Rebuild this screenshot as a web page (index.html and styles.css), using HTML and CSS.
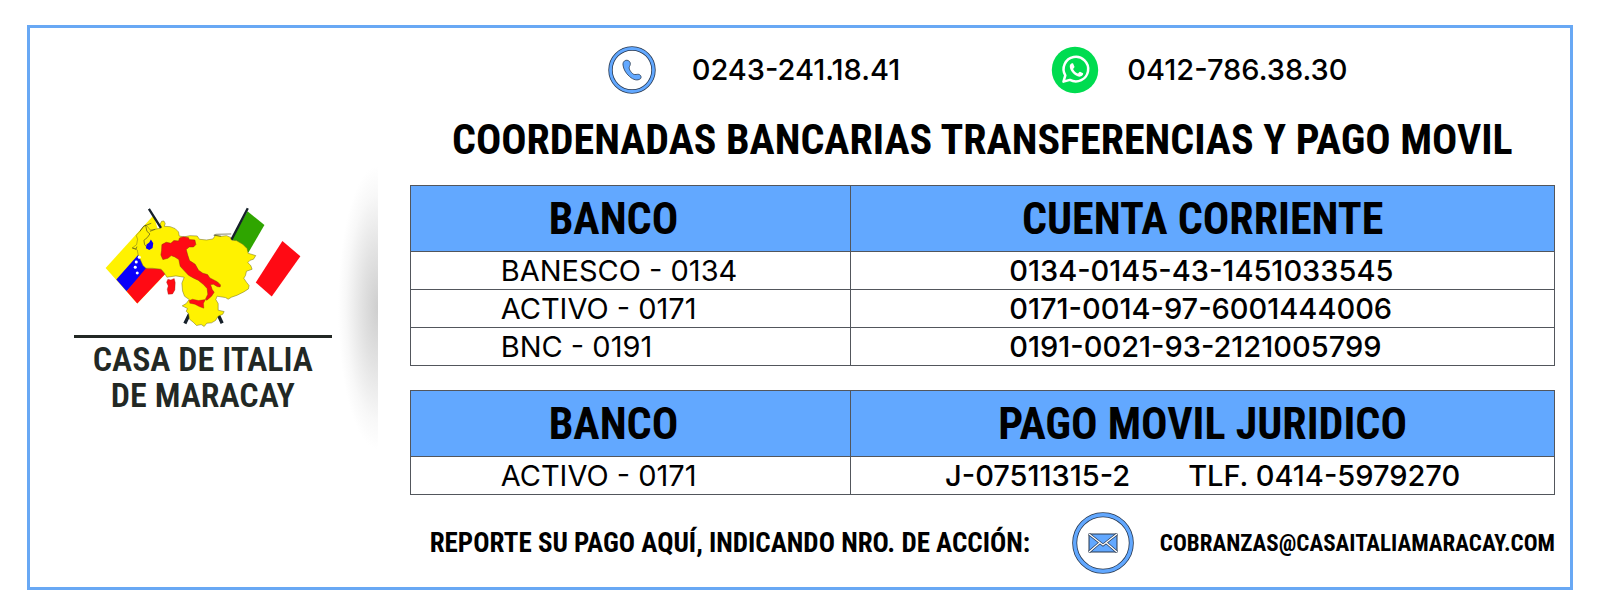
FILE: index.html
```html
<!DOCTYPE html>
<html lang="es">
<head>
<meta charset="utf-8">
<title>Casa de Italia de Maracay - Coordenadas bancarias</title>
<meta name="viewport" content="width=device-width, initial-scale=1">
<link rel="stylesheet" href="styles.css">
</head>
<body>
<div class="frame">
  <aside class="brand">
    <svg class="emblem" viewBox="42 50 774 372" aria-hidden="true">
      <path d="M281 78 137 236 232 343 330 240Z" fill="#fff200"/>
      <path d="M238 193 169 271 200 306 262 240Z" fill="#0a00fa"/>
      <path d="M258 237 200 306 232 343 318 252 300 238Z" fill="#ff0a14"/>
      <path d="M563 66 614 107 566 190 516 150Z" fill="#2fa500"/>
      <path d="M668 155 722 201 636 322 588 280Z" fill="#ff0a14"/>
      <path d="M389 374 375 403M474 374 487 402" stroke="#16202a" stroke-width="10"/>
      <path d="M217 176 230 166 233 150 229 138 240 126 252 110 258 107 263 112 271 122 286 120 304 116 301 104 305 96 312 95 316 103 313 111 331 112 346 118 356 128 358 140 372 143 390 139 412 140 419 150 440 152 459 149 467 138 484 141 500 139 514 145 516 153 530 154 549 165 562 178 565 192 588 199 581 210 571 213 564 220 573 229 577 240 560 246 557 259 552 267 560 279 568 289 566 299 552 308 532 318 515 324 505 330 497 325 472 321 468 331 475 343 475 363 493 367 489 375 475 381 467 394 455 401 441 402 433 412 424 406 410 409 400 399 389 390 386 373 379 366 383 358 367 350 379 343 388 331 374 321 368 305 366 282 373 264 348 260 321 264 313 251 304 240 277 237 258 237 249 229 242 213 235 198 232 182 226 178Z" fill="#fff200" stroke="#6d6a20" stroke-width="1.5" stroke-linejoin="round"/>
      <path d="M240 126 251 111 274 102M257 107 261 126 270 134 262 145 252 153 254 166 263 176M270 126 286 120M484 141 462 138 468 135 514 134M217 176 228 180 231 172" fill="none" stroke="#4b4b20" stroke-width="2"/>
      <path d="M273 151 280 162 278 176 268 182 258 177 260 166 268 160Z" fill="#0a00fa"/>
      <path d="M306 166 319 159 333 162 342 154 356 155 359 146 371 142 386 145 388 151 405 152 408 166 401 173 388 173 379 181 384 199 389 214 406 225 416 243 429 252 443 256 450 266 473 278 482 287 481 293 472 292 461 285 452 286 457 301 463 309 455 321 441 333 437 330 444 315 442 298 431 286 415 273 402 267 386 258 370 241 361 231 357 211 345 203 334 199 324 207 309 211 303 197 305 184Z" fill="#ff0a14" stroke="#8e2b10" stroke-width="1.5" stroke-linejoin="round"/>
      <path d="M388 334 398 330 416 334 437 331 431 342 432 357 418 352 405 345 390 342Z" fill="#ff0a14" stroke="#8e2b10"/>
      <path d="M324 270 333 272 343 268 346 280 345 302 338 314 325 315 322 300 325 290 320 279Z" fill="#ff0a14" stroke="#8e2b10"/>
      <g fill="#fff"><circle cx="238" cy="204" r="4.500"/><circle cx="229" cy="218" r="4.500"/><circle cx="226" cy="234" r="4.500"/><circle cx="232" cy="251" r="4.500"/></g>
      <path d="M267 59 303 116M564 57 515 151" stroke="#16202a" stroke-width="7"/>
    </svg>
    <p class="brand-name">CASA DE ITALIA<br>DE MARACAY</p>
  </aside>
  <main class="content">
    <ul class="phones">
      <li class="phone">
        <svg class="phone-icon" viewBox="0 0 48 48" aria-hidden="true">
          <circle cx="24" cy="24" r="21.5" fill="#fff" stroke="#28384f" stroke-width="4.4"/>
          <circle cx="24" cy="24" r="21.5" fill="none" stroke="#62a8ff" stroke-width="2.8"/>
          <path d="M15 19C14.500 15.500 17.500 13.500 20 14.500 22.500 15.500 23 18 21.500 20.500 20.500 22.500 22 25 24.500 27.500 26 29 27.500 28.500 29.500 28.300 32.500 28 34 31 32.500 32.700 29.500 35 25.500 34 21.500 30.500 17.500 27 15.500 23 15 19Z" fill="#62a8ff" stroke="#28384f" stroke-width=".8"/>
        </svg>
        <span>0243-241.18.41</span>
      </li>
      <li class="phone whatsapp">
        <svg class="phone-icon" viewBox="0 0 48 48" aria-hidden="true">
          <circle cx="24" cy="24" r="23.200" fill="#00dc50"/>
          <path d="M12.500 35.600 14.300 29.400A12.300 12.300 0 1 1 18.900 33.900Z" fill="none" stroke="#fff" stroke-width="2.500" stroke-linejoin="round"/>
          <path d="M18.800 21C18.500 18.500 20.500 16.700 22 17.300L23.500 20.700C23.500 21.700 22.300 22.300 22.200 23.200 23 25 24.700 26.700 26.700 27.400 27.700 27.300 28.200 25.800 29 25.700L32.100 27.300C32.500 29 30.500 30.800 28.300 30.700 24 30 19.200 25.300 18.800 21Z" fill="#fff"/>
        </svg>
        <span>0412-786.38.30</span>
      </li>
    </ul>
    <h1 class="title">COORDENADAS BANCARIAS TRANSFERENCIAS Y PAGO MOVIL</h1>
    <table class="accounts">
      <thead><tr><th class="bank-head" scope="col">BANCO</th><th scope="col">CUENTA CORRIENTE</th></tr></thead>
      <tbody>
        <tr><td class="bank">BANESCO - 0134</td><td class="number">0134-0145-43-1451033545</td></tr>
        <tr><td class="bank">ACTIVO - 0171</td><td class="number">0171-0014-97-6001444006</td></tr>
        <tr><td class="bank">BNC - 0191</td><td class="number">0191-0021-93-2121005799</td></tr>
      </tbody>
    </table>
    <table class="accounts">
      <thead><tr><th class="bank-head" scope="col">BANCO</th><th scope="col">PAGO MOVIL JURIDICO</th></tr></thead>
      <tbody>
        <tr><td class="bank">ACTIVO - 0171</td><td><div class="mobile"><span>J-07511315-2</span><span>TLF. 0414-5979270</span></div></td></tr>
      </tbody>
    </table>
    <footer class="report">
      <p class="report-text">REPORTE SU PAGO AQUÍ, INDICANDO NRO. DE ACCIÓN:</p>
      <svg class="mail-icon" viewBox="0 0 62 62" aria-hidden="true">
        <circle cx="31" cy="31" r="28.300" fill="#fff" stroke="#28384f" stroke-width="5"/>
        <circle cx="31" cy="31" r="28.300" fill="none" stroke="#62a8ff" stroke-width="3.400"/>
        <rect x="17" y="22" width="28" height="18" fill="#62a8ff" stroke="#28384f"/>
        <path d="M17 22 31 33 45 22M17 40 28 30.500M45 40 34 30.500" fill="none" stroke="#28384f" stroke-width="2.600"/>
        <path d="M17 22 31 33 45 22M17 40 28 30.500M45 40 34 30.500" fill="none" stroke="#fff" stroke-width="1.300"/>
      </svg>
      <a class="mail" href="mailto:cobranzas@casaitaliamaracay.com">COBRANZAS@CASAITALIAMARACAY.COM</a>
    </footer>
  </main>
</div>
</body>
</html>
```
FILE: styles.css
```css
* { box-sizing: border-box; }

body {
  margin: 0;
  min-height: 100vh;
  display: flex;
  padding: 25px 27px;
  background: #fff;
  color: #000;
  font-family: Inter, "Liberation Sans", sans-serif;
  font-weight: 500;
}

h1, p, ul { margin: 0; padding: 0; }

.frame {
  flex: 1;
  display: flex;
  gap: 32px;
  padding-right: 15px;
  border: 3px solid #68a8f4;
}

.brand {
  flex: 0 0 22.8%;
  align-self: center;
  display: flex;
  flex-direction: column;
  align-items: center;
  padding: 40px 46px 36px 44px;
  background: radial-gradient(ellipse 40px 50% at 100% 50%, #cecece, #e2e2e2 40%, #f8f8f8 80%, #fff);
}

.emblem { width: 100%; display: block; }

.brand-name {
  width: 100%;
  margin-top: 5px;
  padding-top: 3px;
  border-top: 3px solid #222824;
  color: #222824;
  font: 600 34px/36px "Roboto Condensed", "Open Sans", sans-serif;
  text-align: center;
  white-space: nowrap;
}

.content { flex: 1; min-width: 0; }

.phones {
  display: flex;
  list-style: none;
  gap: 151px;
  padding: 18px 0 0 198px;
}

.phone {
  display: flex;
  align-items: center;
  gap: 36px;
  font-size: 29px;
  line-height: 48px;
  white-space: nowrap;
}

.whatsapp { gap: 28px; }

.phone-icon { width: 48px; height: 48px; }

.title, .accounts th, .report {
  font-family: "Roboto Condensed", "Open Sans", sans-serif;
  font-weight: 700;
  white-space: nowrap;
}

.title {
  padding: 18px 0 17px;
  font-size: 42px;
  line-height: 56px;
  text-align: center;
}

.accounts {
  width: 100%;
  border-collapse: collapse;
  table-layout: fixed;
  margin-bottom: 24px;
}

.accounts:last-of-type { margin-bottom: 17px; }

.accounts th, .accounts td { border: 1px solid #52565c; padding: 0; }

.accounts th {
  height: 66px;
  background: #62a8ff;
  font-size: 44px;
  line-height: 64px;
}

.accounts .bank-head { width: 38.5%; padding-right: 34px; }

.accounts td { height: 38px; line-height: 36px; font-size: 29px; white-space: nowrap; }
.accounts .bank { padding-left: 90px; font-weight: 400; }
.accounts .number { padding-left: 158px; }

.mobile { display: flex; justify-content: center; gap: 58px; }

.report {
  display: flex;
  align-items: center;
  padding-left: 20px;
}

.report-text { flex: 1; font-size: 27px; }
.mail-icon { flex: none; width: 62px; height: 62px; margin-right: 26px; }
.mail { color: inherit; font-size: 23px; text-decoration: none; }
```
